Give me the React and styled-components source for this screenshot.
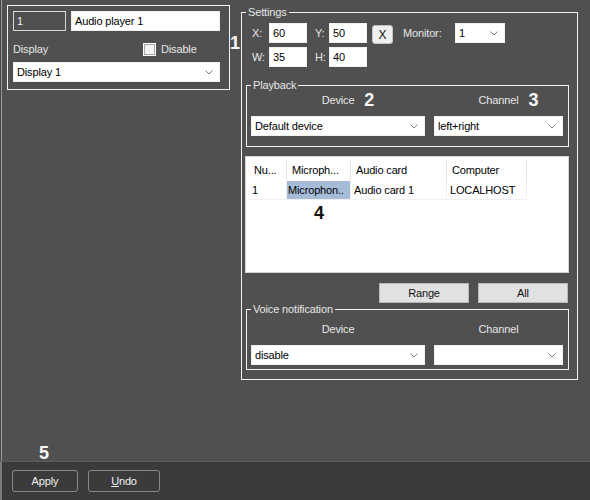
import React from "react";
import styled, { createGlobalStyle } from "styled-components";

const GlobalStyle = createGlobalStyle`
  html, body { margin: 0; padding: 0; background: #505050; }
  body {
    font-family: "Liberation Sans", Arial, sans-serif;
    font-size: 11px;
    letter-spacing: -0.15px;
  }
  * { box-sizing: border-box; }
`;

const Page = styled.div`
  width: 590px;
  height: 500px;
  display: flex;
  flex-direction: column;
  background: #505050;
  box-shadow: inset 1px 0 #454545, inset 2px 0 #9a9a9a;
  color: #ececec;
  overflow: hidden;
`;

const Main = styled.div`
  flex: 1;
  display: flex;
  flex-direction: column;
  padding: 5px 0 0 7px;
  border-bottom: 1px solid #5c5c5c;
`;

const TopRow = styled.div`
  display: flex;
  align-items: flex-start;
`;

const LeftPanel = styled.div`
  width: 223px;
  height: 85px;
  border: 1px solid #f2f2f2;
  padding: 5px 9px 0 5px;
  display: flex;
  flex-direction: column;
`;

const Row = styled.div`
  display: flex;
  align-items: ${(p) => p.$align || "center"};
  gap: ${(p) => p.$gap || 0}px;
  margin-top: ${(p) => p.$mt || 0}px;
  margin-left: ${(p) => p.$ml || 0}px;
  height: ${(p) => (p.$h ? `${p.$h}px` : "auto")};
`;

const Marker = styled.div`
  width: ${(p) => p.$w || 11}px;
  margin-top: ${(p) => p.$mt || 0}px;
  padding-left: ${(p) => p.$pl || 0}px;
  font-family: "Liberation Sans", Arial, sans-serif;
  font-weight: bold;
  font-size: 18px;
  line-height: 18px;
  letter-spacing: 0;
  color: #f6f6f6;
`;

const TextBox = styled.div`
  width: ${(p) => (p.$w ? `${p.$w}px` : "auto")};
  flex: ${(p) => (p.$w ? "none" : 1)};
  height: 20px;
  line-height: 18px;
  padding-left: 3px;
  background: ${(p) => (p.$dark ? "#505050" : "#ffffff")};
  border: 1px solid ${(p) => (p.$dark ? "#d8d8d8" : "#f0f0f0")};
  color: ${(p) => (p.$dark ? "#f0f0f0" : "#000")};
  white-space: nowrap;
  overflow: hidden;
`;

const Label = styled.div`
  width: ${(p) => (p.$w ? `${p.$w}px` : "auto")};
  flex: none;
  padding-left: ${(p) => p.$pl || 0}px;
  color: #e6e6e6;
  line-height: ${(p) => p.$lh || 15}px;
  white-space: nowrap;
`;

const Check = styled.span`
  width: 13px;
  height: 13px;
  flex: none;
  background: #f4f4f4;
  border: 1px solid #ffffff;
  box-shadow: inset 0 0 0 1px #a8a8a8;
  margin-right: 5px;
`;

const SelectBox = styled.div`
  width: ${(p) => (p.$w ? `${p.$w}px` : "100%")};
  height: 20px;
  flex: none;
  display: flex;
  align-items: center;
  justify-content: space-between;
  padding: 0 6px 0 3px;
  background: #fff;
  border: 1px solid #f0f0f0;
  color: #000;
  white-space: nowrap;
`;

const Chevron = () => (
  <svg width="8" height="5" viewBox="0 0 8 5">
    <path d="M0.5 0.5 L4 4 L7.5 0.5" fill="none" stroke="#7c7c7c" strokeWidth="1" />
  </svg>
);

const Select = ({ value, w }) => (
  <SelectBox $w={w}>
    <span>{value}</span>
    <Chevron />
  </SelectBox>
);

const Group = styled.fieldset`
  margin: ${(p) => p.$m || 0};
  min-width: 0;
  width: ${(p) => p.$w}px;
  border: 1px solid #f2f2f2;
  padding: ${(p) => p.$pad};
`;

const Legend = styled.legend`
  padding: 0 2px;
  margin: 0;
  line-height: 13px;
  font-size: 11px;
  color: #e6e6e6;
`;

const SmallButton = styled.div`
  width: 21px;
  height: 19px;
  margin: 2px 0 0 5px;
  display: flex;
  align-items: center;
  justify-content: center;
  background: #f0f0f0;
  border: 1px solid #c4c4c4;
  border-radius: 3px;
  color: #111;
  font-size: 12px;
  font-weight: 300;
`;

const Columns = styled.div`
  display: flex;
  gap: 9px;
`;

const Column = styled.div`
  display: flex;
  flex-direction: column;
  align-items: center;
  gap: 8px;
`;

const ColLabel = styled.div`
  position: relative;
  line-height: 15px;
  color: #e6e6e6;
`;

const NumTag = styled.span`
  position: absolute;
  left: calc(100% + 10px);
  top: -2px;
  font-weight: bold;
  font-size: 18px;
  line-height: 18px;
  letter-spacing: 0;
  color: #f6f6f6;
`;

const Table = styled.div`
  width: 324px;
  height: 117px;
  margin: 9px 0 0 -1px;
  padding: 3px 0 0 3px;
  background: #fff;
  border: 1px solid #d4d4d4;
  display: grid;
  grid-template-columns: 38px 64px 96px 80px;
  grid-auto-rows: 20px;
  align-content: start;
  color: #000;
`;

const Cell = styled.div`
  line-height: 20px;
  border-right: 1px solid ${(p) => (p.$head ? "#e5e5e5" : "#f0f0f0")};
  border-bottom: ${(p) => (p.$head ? "none" : "1px solid #f0f0f0")};
  white-space: nowrap;
  overflow: hidden;
  background: ${(p) => (p.$sel ? "linear-gradient(#fff 0 1px, #a7bcd9 1px 19px, #fff 19px)" : "transparent")};
  padding-left: ${(p) => (p.$sel ? 1 : p.$head ? 5 : 3)}px;
`;

const TableMark = styled.div`
  grid-column: 2;
  text-align: center;
  font-weight: bold;
  font-size: 18px;
  line-height: 26px;
  letter-spacing: 0;
  color: #111;
`;

const ButtonRow = styled.div`
  display: flex;
  justify-content: flex-end;
  gap: 9px;
  margin: 10px 1px 0 0;
`;

const LightButton = styled.div`
  width: 90px;
  height: 20px;
  line-height: 18px;
  text-align: center;
  background: #e1e1e1;
  border: 1px solid #b8b8b8;
  color: #111;
`;

const Spacer = styled.div`
  flex: 1;
`;

const Footer = styled.div`
  height: 38px;
  background: #3b3b3b;
  display: flex;
  gap: 10px;
  padding: 8px 12px;
  box-shadow: inset 2px 0 #7a7a7a;
`;

const DarkButton = styled.div`
  width: ${(p) => p.$w}px;
  height: 22px;
  line-height: 20px;
  text-align: center;
  border: 1px solid #8a8a8a;
  border-radius: 3px;
  color: #f0f0f0;
  u { text-decoration: underline; }
`;

export default function App() {
  return (
    <>
      <GlobalStyle />
      <Page>
        <Main>
          <TopRow>
            <LeftPanel>
              <Row $gap={5}>
                <TextBox $w={53} $dark>1</TextBox>
                <TextBox>Audio player 1</TextBox>
              </Row>
              <Row $mt={8} $h={20}>
                <Label $w={130}>Display</Label>
                <Check />
                <Label>Disable</Label>
              </Row>
              <Row $mt={3}>
                <Select value="Display 1" />
              </Row>
            </LeftPanel>

            <Marker $mt={29}>1</Marker>

            <Group $w={337} $m="1px 0 0 0" $pad="4px 8px 9px 4px">
              <Legend>Settings</Legend>
              <Row $ml={6} $align="flex-start" $h={20}>
                <Label $w={17} $lh={20}>X:</Label>
                <TextBox $w={38}>60</TextBox>
                <Label $w={22} $lh={20} $pl={8}>Y:</Label>
                <TextBox $w={38}>50</TextBox>
                <SmallButton>X</SmallButton>
                <Label $w={62} $lh={20} $pl={10}>Monitor:</Label>
                <Select value="1" w={50} />
              </Row>
              <Row $ml={6} $mt={4} $h={20}>
                <Label $w={17} $lh={20}>W:</Label>
                <TextBox $w={38}>35</TextBox>
                <Label $w={22} $lh={20} $pl={8}>H:</Label>
                <TextBox $w={38}>40</TextBox>
              </Row>

              <Group $w={323} $m="12px 0 0 0" $pad="1px 5px 10px 4px">
                <Legend>Playback</Legend>
                <Columns>
                  <Column>
                    <ColLabel>
                      Device<NumTag>2</NumTag>
                    </ColLabel>
                    <Select value="Default device" w={174} />
                  </Column>
                  <Column>
                    <ColLabel>
                      Channel<NumTag>3</NumTag>
                    </ColLabel>
                    <Select value="left+right" w={129} />
                  </Column>
                </Columns>
              </Group>

              <Table>
                <Cell $head>Nu...</Cell>
                <Cell $head>Microph...</Cell>
                <Cell $head>Audio card</Cell>
                <Cell $head>Computer</Cell>
                <Cell>1</Cell>
                <Cell $sel>Microphon..</Cell>
                <Cell>Audio card 1</Cell>
                <Cell>LOCALHOST</Cell>
                <TableMark>4</TableMark>
              </Table>

              <ButtonRow>
                <LightButton>Range</LightButton>
                <LightButton>All</LightButton>
              </ButtonRow>

              <Group $w={323} $pad="6px 5px 4px 4px">
                <Legend>Voice notification</Legend>
                <Columns>
                  <Column>
                    <ColLabel>Device</ColLabel>
                    <Select value="disable" w={174} />
                  </Column>
                  <Column>
                    <ColLabel>Channel</ColLabel>
                    <Select value="" w={129} />
                  </Column>
                </Columns>
              </Group>
            </Group>
          </TopRow>
          <Spacer />
          <Marker $w={60} $pl={32} style={{ lineHeight: "16px", height: 16 }}>5</Marker>
        </Main>
        <Footer>
          <DarkButton $w={66}>Apply</DarkButton>
          <DarkButton $w={72}>
            <u>U</u>ndo
          </DarkButton>
        </Footer>
      </Page>
    </>
  );
}
